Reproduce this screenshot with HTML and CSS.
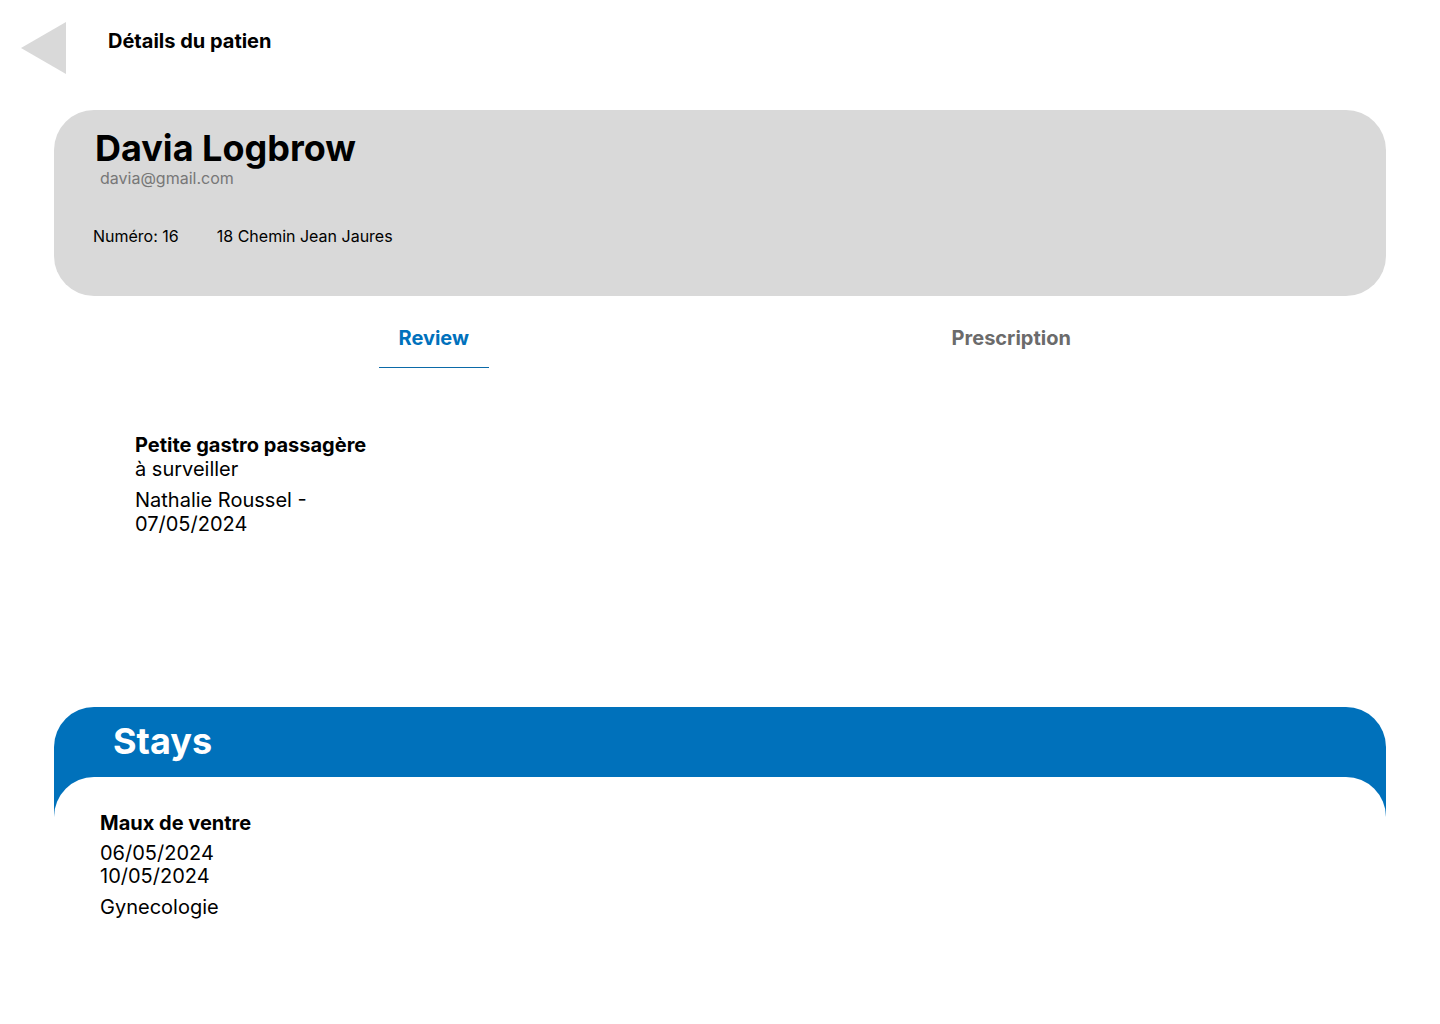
FILE: index.html
```html
<!DOCTYPE html>
<html lang="fr">
<head>
<meta charset="utf-8">
<title>Détails du patien</title>
<link rel="stylesheet" href="styles.css">
</head>
<body>
<header class="topbar">
  <svg class="back" width="45" height="52" viewBox="0 0 45 52"><polygon points="45,0 45,52 0,26" fill="#d9d9d9"/></svg>
  <h1 class="page-title">Détails du patien</h1>
</header>

<section class="patient-card">
  <h2 class="patient-name">Davia Logbrow</h2>
  <div class="patient-email">davia@gmail.com</div>
  <div class="patient-info">
    <span>Numéro: 16</span>
    <span>18 Chemin Jean Jaures</span>
  </div>
</section>

<nav class="tabs">
  <div class="tab active"><span>Review</span></div>
  <div class="tab"><span>Prescription</span></div>
</nav>

<section class="review">
  <div class="review-title">Petite gastro passagère</div>
  <div class="review-text">à surveiller</div>
  <div class="review-meta">Nathalie Roussel - 07/05/2024</div>
</section>

<section class="stays">
  <div class="stays-head">Stays</div>
  <div class="stays-body">
    <div class="stay-title">Maux de ventre</div>
    <div class="stay-dates">06/05/2024<br>10/05/2024</div>
    <div class="stay-dept">Gynecologie</div>
  </div>
</section>
</body>
</html>
```

FILE: styles.css
```css
* { box-sizing: border-box; }
body {
  margin: 0;
  background: #fff;
  font-family: Inter, "Noto Sans", sans-serif;
  color: #000;
}
.topbar {
  display: flex;
  align-items: flex-start;
  padding: 22px 0 0 21px;
  height: 110px;
}
.back { display: block; }
.page-title {
  margin: 7px 0 0 42px;
  font-size: 20px;
  font-weight: 700;
  line-height: 24px;
}
.patient-card {
  margin: 0 54px;
  height: 186px;
  background: #d9d9d9;
  border-radius: 40px;
  padding: 16px 39px 0;
}
.patient-name {
  margin: 0 0 0 2px;
  font-size: 36px;
  font-weight: 700;
  line-height: 44px;
}
.patient-email {
  margin: -1px 0 0 7px;
  font-size: 16px;
  color: #777;
  line-height: 18px;
}
.patient-info {
  display: flex;
  gap: 38px;
  margin-top: 40px;
  font-size: 16px;
  line-height: 18px;
}
.tabs {
  display: flex;
  margin: 0 140px 0 145px;
  padding-top: 28px;
}
.tab {
  flex: 1;
  display: flex;
  justify-content: center;
}
.tab span {
  display: block;
  font-size: 20px;
  font-weight: 700;
  color: #6b6b6b;
  line-height: 28px;
  padding: 0 20px 15px;
}
.tab.active span {
  color: #0071bc;
  border-bottom: 1px solid #0b6aa8;
}
.review {
  padding: 65px 0 0 135px;
  width: 380px;
  height: 339px;
  font-size: 20px;
  line-height: 24px;
}
.review-title { font-weight: 700; }
.review-meta { margin-top: 7px; }
.stays {
  margin: 0 54px;
  background: #0071bb;
  border-radius: 40px 40px 0 0;
}
.stays-head {
  height: 70px;
  padding: 10px 0 0 59px;
  color: #fff;
  font-size: 36px;
  font-weight: 700;
  line-height: 48px;
}
.stays-body {
  background: #fff;
  border-radius: 40px 40px 0 0;
  padding: 34px 46px 0;
  height: 247px;
  font-size: 20px;
  line-height: 24px;
}
.stay-title { font-weight: 700; }
.stay-dates { margin-top: 7px; line-height: 23px; }
.stay-dept { margin-top: 7px; }
```
